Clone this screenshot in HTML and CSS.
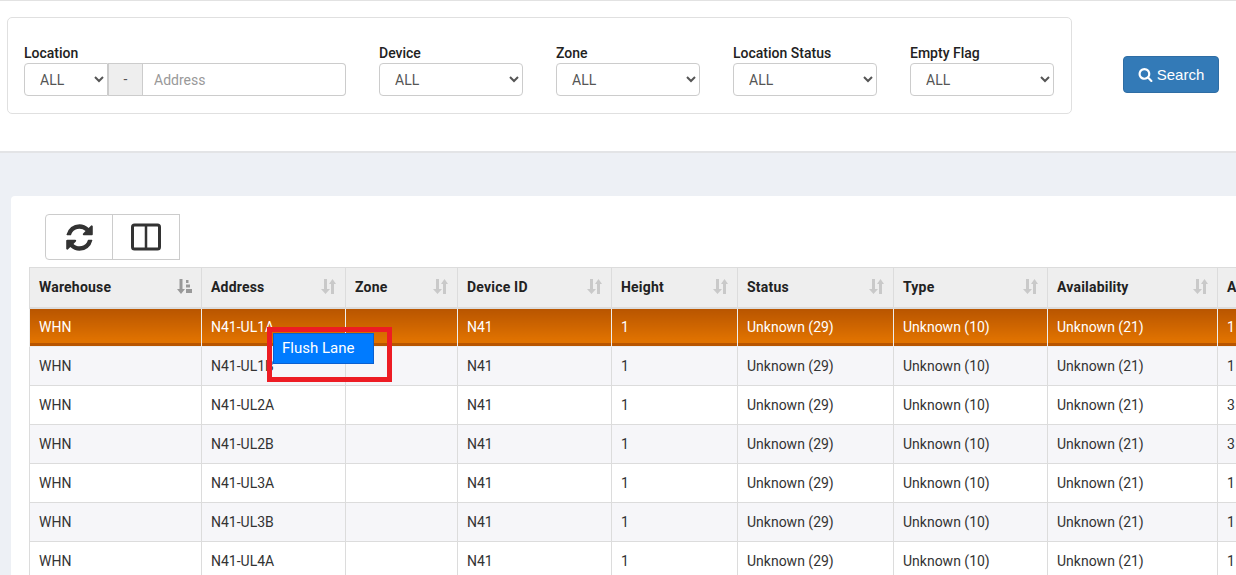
FILE: index.html
```html
<!DOCTYPE html>
<html>
<head>
  <title>Location Inquiry</title>
  <link rel="stylesheet" href="styles.css">
</head>
<body>
  <svg class="defs" width="0" height="0">
    <symbol id="sort" viewBox="0 0 15 15">
      <path d="M3 0h3v10h3l-4.5 5L0 10h3z"/>
      <path d="M10 15h3V5h2l-3.5-5L8 5h2z" transform="translate(0 0)"/>
    </symbol>
    <symbol id="sort-asc" viewBox="0 0 15 15">
      <path d="M2.500 0h3v10h2.500l-4 5-4-5h2.500z"/>
      <path d="M9 1h2.500v3H9zM9 5.500h4v3H9zM9 10h6v4H9z"/>
    </symbol>
  </svg>

  <section class="search-panel">
    <form class="filter-box">
      <div class="field field-location">
        <label>Location</label>
        <div class="input-group">
          <select class="group-select"><option>ALL</option></select>
          <span class="group-addon">-</span>
          <input class="group-input" type="text" placeholder="Address">
        </div>
      </div>
      <div class="field">
        <label>Device</label>
        <select><option>ALL</option></select>
      </div>
      <div class="field">
        <label>Zone</label>
        <select><option>ALL</option></select>
      </div>
      <div class="field">
        <label>Location Status</label>
        <select><option>ALL</option></select>
      </div>
      <div class="field">
        <label>Empty Flag</label>
        <select><option>ALL</option></select>
      </div>
    </form>
    <button class="btn-search" type="button">
      <svg width="15" height="15" viewBox="0 0 1792 1792" fill="currentColor"><path d="M1216 832q0-185-131.500-316.500t-316.500-131.500-316.500 131.500-131.500 316.500 131.500 316.500 316.500 131.500 316.500-131.500 131.500-316.500zm512 832q0 52-38 90t-90 38q-54 0-90-38l-343-342q-179 124-399 124-143 0-273.500-55.500t-225-150-150-225-55.500-273.500 55.500-273.500 150-225 225-150 273.500-55.500 273.500 55.500 225 150 150 225 55.500 273.500q0 220-124 399l343 343q37 37 37 90z"/></svg>
      Search
    </button>
  </section>

  <section class="table-card">
    <div class="toolbar">
      <button class="tool-btn" type="button">
        <svg width="31" height="31" viewBox="0 0 1792 1792" fill="#333"><path d="M1639 1056q0 5-1 7-64 268-268 434.500t-478 166.500q-146 0-282.500-55t-243.500-157l-129 129q-19 19-45 19t-45-19-19-45v-448q0-26 19-45t45-19h448q26 0 45 19t19 45-19 45l-137 137q71 66 161 102t187 36q134 0 250-65t186-179q11-17 53-117 8-23 30-23h192q13 0 22.500 9.500t9.500 22.500zm25-800v448q0 26-19 45t-45 19h-448q-26 0-45-19t-19-45 19-45l138-138q-148-137-349-137-134 0-250 65t-186 179q-11 17-53 117-8 23-30 23h-199q-13 0-22.500-9.500t-9.500-22.500v-7q65-268 270-434.500t480-166.500q146 0 284 55.500t245 156.500l130-129q19-19 45-19t45 19 19 45z"/></svg>
      </button>
      <button class="tool-btn" type="button">
        <svg width="30" height="28" viewBox="0 0 30 28" fill="none" stroke="#333"><rect x="1.500" y="2" width="27" height="24" rx="2" stroke-width="3"/><path d="M15 2v24" stroke-width="2.500"/></svg>
      </button>
    </div>

    <table class="grid">
      <colgroup>
        <col style="width:172px"><col style="width:144px"><col style="width:112px"><col style="width:154px"><col style="width:126px"><col style="width:156px"><col style="width:154px"><col style="width:170px"><col style="width:120px">
      </colgroup>
      <thead>
        <tr>
          <th>Warehouse<svg class="sort sort-on"><use href="#sort-asc"/></svg></th>
          <th>Address<svg class="sort"><use href="#sort"/></svg></th>
          <th>Zone<svg class="sort"><use href="#sort"/></svg></th>
          <th>Device ID<svg class="sort"><use href="#sort"/></svg></th>
          <th>Height<svg class="sort"><use href="#sort"/></svg></th>
          <th>Status<svg class="sort"><use href="#sort"/></svg></th>
          <th>Type<svg class="sort"><use href="#sort"/></svg></th>
          <th>Availability<svg class="sort"><use href="#sort"/></svg></th>
          <th>Aisle</th>
        </tr>
      </thead>
      <tbody>
        <tr class="selected"><td>WHN</td><td>N41-UL1A</td><td></td><td>N41</td><td>1</td><td>Unknown (29)</td><td>Unknown (10)</td><td>Unknown (21)</td><td>1</td></tr>
        <tr class="odd"><td>WHN</td><td>N41-UL1B</td><td></td><td>N41</td><td>1</td><td>Unknown (29)</td><td>Unknown (10)</td><td>Unknown (21)</td><td>1</td></tr>
        <tr><td>WHN</td><td>N41-UL2A</td><td></td><td>N41</td><td>1</td><td>Unknown (29)</td><td>Unknown (10)</td><td>Unknown (21)</td><td>3</td></tr>
        <tr class="odd"><td>WHN</td><td>N41-UL2B</td><td></td><td>N41</td><td>1</td><td>Unknown (29)</td><td>Unknown (10)</td><td>Unknown (21)</td><td>3</td></tr>
        <tr><td>WHN</td><td>N41-UL3A</td><td></td><td>N41</td><td>1</td><td>Unknown (29)</td><td>Unknown (10)</td><td>Unknown (21)</td><td>1</td></tr>
        <tr class="odd"><td>WHN</td><td>N41-UL3B</td><td></td><td>N41</td><td>1</td><td>Unknown (29)</td><td>Unknown (10)</td><td>Unknown (21)</td><td>1</td></tr>
        <tr><td>WHN</td><td>N41-UL4A</td><td></td><td>N41</td><td>1</td><td>Unknown (29)</td><td>Unknown (10)</td><td>Unknown (21)</td><td>1</td></tr>
      </tbody>
    </table>
  </section>

  <div class="highlight-box"></div>
  <div class="context-menu">Flush Lane</div>
</body>
</html>
```

FILE: styles.css
```css
html, body {
  height: 575px;
  overflow: hidden;
}

body {
  margin: 0;
  background-color: #edf0f5;
  font-family: Roboto, "Liberation Sans", sans-serif;
  font-size: 14px;
  color: #333;
}

.defs {
  display: block;
  height: 0;
}

/* search panel */
.search-panel {
  display: flex;
  align-items: flex-start;
  box-sizing: border-box;
  height: 153px;
  padding: 16px 17px 0 7px;
  background-color: #fff;
  border-top: 1px solid #e2e2e2;
  border-bottom: 2px solid #e3e4e6;
}

.filter-box {
  display: flex;
  gap: 33px;
  box-sizing: border-box;
  width: 1065px;
  height: 97px;
  padding: 26px 16px 0;
  border: 1px solid #e0e0e0;
  border-radius: 5px;
}

.field {
  display: flex;
  flex-direction: column;
  width: 144px;
}

.field-location {
  width: 322px;
}

.field label {
  height: 19px;
  font-weight: 500;
  font-size: 14px;
  line-height: 18px;
  color: #222;
}

select {
  box-sizing: border-box;
  height: 33px;
  width: 100%;
  padding: 0 6px 0 11px;
  background-color: #fff;
  border: 1px solid #ccc;
  border-radius: 4px;
  font-family: Roboto, "Liberation Sans", sans-serif;
  font-size: 14px;
  color: #555;
}

.input-group {
  display: flex;
  height: 33px;
}

.group-select {
  width: 84px;
  border-radius: 4px 0 0 4px;
}

.group-addon {
  box-sizing: border-box;
  width: 35px;
  line-height: 31px;
  text-align: center;
  background-color: #eee;
  border: 1px solid #ccc;
  border-left-width: 1px;
  color: #555;
}

.group-input {
  flex: 1;
  min-width: 0;
  box-sizing: border-box;
  padding: 0 11px;
  border: 1px solid #ccc;
  border-left: 0;
  border-radius: 0 4px 4px 0;
  font-family: Roboto, "Liberation Sans", sans-serif;
  font-size: 14px;
}

.group-input::placeholder {
  color: #999;
}

.btn-search {
  display: flex;
  align-items: center;
  justify-content: center;
  gap: 4px;
  box-sizing: border-box;
  width: 96px;
  height: 37px;
  margin: 39px 0 0 51px;
  background-color: #337ab7;
  border: 1px solid #2e6da4;
  border-radius: 4px;
  color: #fff;
  font-family: "Liberation Sans", Arial, sans-serif;
  font-size: 15px;
}

/* table card */
.table-card {
  box-sizing: border-box;
  height: 400px;
  margin: 43px 0 0 11px;
  padding: 18px 0 0 18px;
  background-color: #fff;
  border-radius: 4px 0 0 0;
  overflow: hidden;
}

.toolbar {
  display: flex;
  margin-left: 16px;
  margin-bottom: 7px;
}

.tool-btn {
  display: flex;
  align-items: center;
  justify-content: center;
  box-sizing: border-box;
  width: 68px;
  height: 46px;
  padding: 0;
  background-color: #fff;
  border: 1px solid #ccc;
}

.tool-btn:first-child {
  border-radius: 4px 0 0 4px;
}

.tool-btn + .tool-btn {
  width: 67px;
  margin-left: -1px;
  width: 68px;
}

.grid {
  width: 1308px;
  table-layout: fixed;
  border-collapse: collapse;
}

.grid th,
.grid td {
  box-sizing: border-box;
  border: 1px solid #dcdcdc;
  text-align: left;
  white-space: nowrap;
}

.grid th {
  position: relative;
  height: 40px;
  padding: 0 9px;
  background-color: #eee;
  font-weight: 700;
  font-size: 14px;
  letter-spacing: 0.2px;
  color: #222;
  border-bottom-width: 2px;
}

.grid td {
  height: 39px;
  padding: 0 9px;
}

.grid .odd td {
  background-color: #f6f6f9;
}

.grid .selected td {
  background: linear-gradient(#b85500, #e07200 85%, #e07200 92%, #b85500 92%);
  color: #fff;
  border-color: #eee;
  border-top-color: #dcdcdc;
  font-weight: 400;
}

.sort {
  position: absolute;
  top: 11px;
  right: 9px;
  width: 15px;
  height: 15px;
  fill: #c9c9c9;
}

.sort-on {
  fill: #999;
}

/* lies over the table */
.highlight-box {
  position: absolute;
  left: 267px;
  top: 327px;
  box-sizing: border-box;
  width: 125px;
  height: 55px;
  border: 5px solid #ed1c24;
}

.context-menu {
  position: absolute;
  left: 273px;
  top: 333px;
  box-sizing: border-box;
  width: 101px;
  height: 31px;
  padding-left: 8px;
  background-color: #007bff;
  border: 1px solid #0a5fd0;
  color: #fff;
  font-size: 15px;
  line-height: 29px;
}
```
